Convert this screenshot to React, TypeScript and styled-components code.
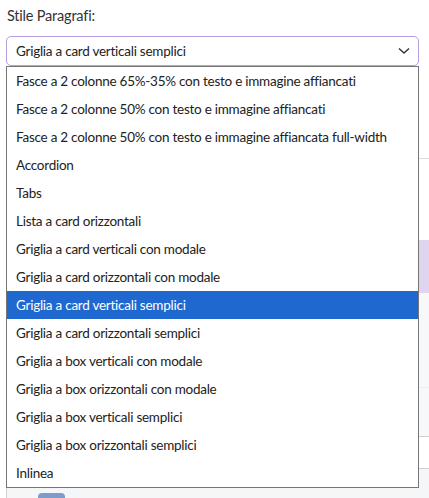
import styled, { createGlobalStyle } from 'styled-components'

const options = [
  'Fasce a 2 colonne 65%-35% con testo e immagine affiancati',
  'Fasce a 2 colonne 50% con testo e immagine affiancati',
  'Fasce a 2 colonne 50% con testo e immagine affiancata full-width',
  'Accordion',
  'Tabs',
  'Lista a card orizzontali',
  'Griglia a card verticali con modale',
  'Griglia a card orizzontali con modale',
  'Griglia a card verticali semplici',
  'Griglia a card orizzontali semplici',
  'Griglia a box verticali con modale',
  'Griglia a box orizzontali con modale',
  'Griglia a box verticali semplici',
  'Griglia a box orizzontali semplici',
  'Inlinea',
]

const selected = 'Griglia a card verticali semplici'

// rows of the form that sits behind the open list
const backRows = [
  { height: 93, bg: '#ffffff', line: '#dcdcdc' },
  { height: 81, bg: '#ffffff', line: 'transparent' },
  { height: 53, bg: '#e0d5ee', line: 'transparent' },
  { height: 95, bg: '#f7f8fa', line: '#ececef' },
  { height: 49, bg: '#f7f8fa', line: '#cfcfd3' },
  { height: 32, bg: '#ffffff', line: '#cfcfd3' },
]

const GlobalStyle = createGlobalStyle`
  body {
    margin: 0;
    background: #fff;
    font-family: Lato, "Open Sans", sans-serif;
    color: #212529;
  }
`

export default function App() {
  return (
    <>
      <GlobalStyle />
      <Page>
        <Label>Stile Paragrafi:</Label>
        <SelectBox>
          <span>{selected}</span>
          <Chevron viewBox="0 0 12 8">
            <path d="M1 1.5 L6 6 L11 1.5" fill="none" stroke="#333" strokeWidth="1.4" />
          </Chevron>
        </SelectBox>
        <Backdrop>
          {backRows.map((r, i) => (
            <BackRow key={i} $bg={r.bg} $line={r.line} style={{ height: r.height }} />
          ))}
          <BottomRow>
            <Swatch />
          </BottomRow>
        </Backdrop>
        <List>
          {options.map((o) => (
            <Option key={o} $active={o === selected}>
              {o}
            </Option>
          ))}
        </List>
      </Page>
    </>
  )
}

const Page = styled.div`
  position: relative;
  height: 498px;
  overflow: hidden;
  padding: 6px 10px 0 6px;
  box-sizing: border-box;
`

const Label = styled.div`
  font-size: 14.5px;
  letter-spacing: -0.2px;
  line-height: 20px;
  color: #333;
  padding-left: 1px;
  margin-bottom: 10px;
`

const SelectBox = styled.div`
  height: 30px;
  box-sizing: border-box;
  border: 1px solid #b89ce0;
  border-radius: 5px;
  display: flex;
  align-items: center;
  justify-content: space-between;
  padding: 0 8px 0 9px;
  font-size: 13.5px;
  letter-spacing: -0.25px;
  color: #222;
`

const Chevron = styled.svg`
  width: 12px;
  height: 8px;
`

const Backdrop = styled.div`
  margin-right: -10px;
  display: flex;
  flex-direction: column;
`

const BackRow = styled.div<{ $bg: string; $line: string }>`
  box-sizing: border-box;
  background: ${(p) => p.$bg};
  border-bottom: 1px solid ${(p) => p.$line};
`

const BottomRow = styled.div`
  height: 40px;
  background: #f5f6f8;
  border-left: 1px solid #d0d0d4;
  position: relative;
`

const Swatch = styled.div`
  position: absolute;
  left: 31px;
  top: 24px;
  width: 27px;
  height: 27px;
  border-radius: 4px;
  background: #7e9ccb;
`

const List = styled.div`
  position: absolute;
  top: 66px;
  left: 6px;
  width: 413px;
  box-sizing: border-box;
  border: 1px solid #767676;
  background: #fff;
`

const Option = styled.div<{ $active: boolean }>`
  height: 28px;
  line-height: 28px;
  padding-left: 9px;
  font-size: 13.5px;
  letter-spacing: -0.25px;
  white-space: nowrap;
  color: ${(p) => (p.$active ? '#fff' : '#222')};
  background: ${(p) => (p.$active ? '#1f68d0' : 'transparent')};
`
